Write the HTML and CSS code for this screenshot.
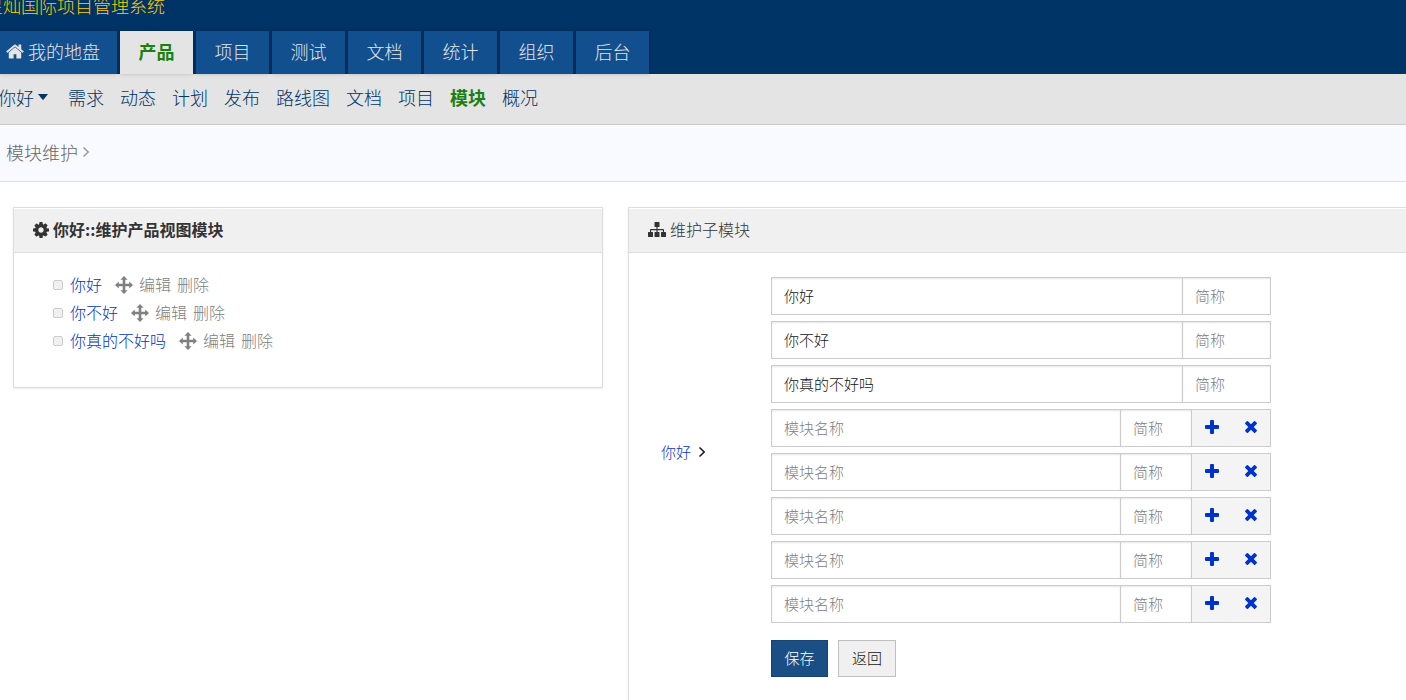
FILE: index.html
```html
<!DOCTYPE html>
<html lang="zh-CN">
<head>
<meta charset="utf-8">
<title>模块维护</title>
<link rel="stylesheet" href="styles.css">
</head>
<body>
<svg class="sprite" aria-hidden="true">
  <symbol id="home" viewBox="64 128 1664 1536"><path d="M1472 992v480q0 26-19 45t-45 19h-384v-384h-256v384h-384q-26 0-45-19t-19-45v-480q0-1 .5-3t.5-3l575-474 575 474q1 2 1 6zm223-69l-62 74q-8 9-21 11h-3q-13 0-21-7l-692-577-692 577q-12 8-24 7-13-2-21-11l-62-74q-8-10-7-23.500t11-21.500l719-599q32-26 76-26t76 26l244 204v-195q0-14 9-23t23-9h192q14 0 23 9t9 23v408l219 182q10 8 11 21.500t-7 23.500z"/></symbol>
  <symbol id="cog" viewBox="128 128 1536 1536"><path d="M1152 896q0-106-75-181t-181-75-181 75-75 181 75 181 181 75 181-75 75-181zm512-109v222q0 12-8 23t-20 13l-185 28q-19 54-39 91 35 50 107 138 10 12 10 25t-9 23q-27 37-99 108t-94 71q-12 0-26-9l-138-108q-44 23-91 38-16 136-29 186-7 28-36 28h-222q-14 0-24.500-8.500t-11.500-21.500l-28-184q-49-16-90-37l-141 107q-10 9-25 9-14 0-25-11-126-114-165-168-7-10-7-23 0-12 8-23 15-21 51-66.500t54-70.500q-27-50-41-99l-183-27q-13-2-21-12.500t-8-23.500v-222q0-12 8-23t19-13l186-28q14-46 39-92-40-57-107-138-10-12-10-24 0-10 9-23 26-36 98.500-107.500t94.500-71.500q13 0 26 10l138 107q44-23 91-38 16-136 29-186 7-28 36-28h222q14 0 24.500 8.500t11.500 21.500l28 184q49 16 90 37l142-107q9-9 24-9 13 0 25 10 129 119 165 170 7 8 7 22 0 12-8 23-15 21-51 66.500t-54 70.500q26 50 41 98l183 28q13 2 21 12.500t8 23.500z"/></symbol>
  <symbol id="move" viewBox="0 0 18 18"><path d="M9 0l3.600 3.800h-2.300v3.900h3.900V5.400L18 9l-3.800 3.600v-2.300h-3.900v3.900h2.300L9 18l-3.600-3.800h2.300v-3.900H3.800v2.300L0 9l3.800-3.600v2.300h3.900V3.800H5.400z"/></symbol>
  <symbol id="sitemap" viewBox="0 0 18 15"><path d="M7 0h4q.5 0 .5.500v4q0 .5-.5.500H9.600v2h5.600q.8 0 .8.800V10h1.500q.5 0 .5.500v4q0 .5-.5.500h-4q-.5 0-.5-.5v-4q0-.5.500-.5h1.400V8.200H9.600V10H11q.5 0 .5.500v4q0 .5-.5.500H7q-.5 0-.5-.5v-4q0-.5.500-.5h1.400V8.200H3.100V10h1.400q.5 0 .5.500v4q0 .5-.5.500h-4q-.5 0-.5-.5v-4q0-.5.500-.5H2V7.800q0-.8.800-.8h5.600V5H7q-.5 0-.5-.5v-4Q6.500 0 7 0z"/></symbol>
  <symbol id="plus" viewBox="0 0 14 14"><path d="M6 0h2q1 0 1 1v4h4q1 0 1 1v2q0 1-1 1H9v4q0 1-1 1H6q-1 0-1-1V9H1Q0 9 0 8V6q0-1 1-1h4V1q0-1 1-1z"/></symbol>
  <symbol id="times" viewBox="0 0 12 12"><path d="M3 .3l3 3 3-3q.6-.5 1.200 0l1.500 1.500q.5.600 0 1.200l-3 3 3 3q.5.600 0 1.200l-1.500 1.500q-.6.500-1.200 0l-3-3-3 3q-.6.500-1.200 0L.3 10.200q-.5-.6 0-1.200l3-3-3-3q-.5-.6 0-1.200L1.800.3Q2.400-.2 3 .3z"/></symbol>
  <symbol id="angle" viewBox="0 0 8 12"><path d="M1.500 1.500L6.200 6l-4.700 4.500" fill="none" stroke="currentColor" stroke-width="1.500"/></symbol>
  <symbol id="caret" viewBox="0 0 10 6"><path d="M0 0h10L5.600 5.500q-.6.600-1.200 0z"/></symbol>
</svg>

<header class="header">
  <div class="brand">星灿国际项目管理系统</div>
  <nav class="tabs" aria-label="主导航">
    <a class="tab tab-home" href="#"><svg class="icon icon-home"><use href="#home"/></svg>我的地盘</a>
    <a class="tab active" href="#">产品</a>
    <a class="tab" href="#">项目</a>
    <a class="tab" href="#">测试</a>
    <a class="tab" href="#">文档</a>
    <a class="tab" href="#">统计</a>
    <a class="tab" href="#">组织</a>
    <a class="tab" href="#">后台</a>
  </nav>
</header>
<nav class="subnav" aria-label="产品导航">
  <a class="current-product" href="#">你好<svg class="icon icon-caret"><use href="#caret"/></svg></a>
  <a href="#">需求</a>
  <a href="#">动态</a>
  <a href="#">计划</a>
  <a href="#">发布</a>
  <a href="#">路线图</a>
  <a href="#">文档</a>
  <a href="#">项目</a>
  <a class="active" href="#">模块</a>
  <a href="#">概况</a>
</nav>
<div class="crumbs">模块维护<svg class="icon icon-angle"><use href="#angle"/></svg></div>

<main class="content">
  <section class="panel">
    <h2 class="panel-title strong"><svg class="icon icon-cog"><use href="#cog"/></svg>你好::维护产品视图模块</h2>
    <ul class="tree">
      <li><input type="checkbox" aria-label="你好"><a class="name" href="#">你好</a><svg class="icon icon-move"><use href="#move"/></svg><a href="#">编辑</a><a href="#">删除</a></li>
      <li><input type="checkbox" aria-label="你不好"><a class="name" href="#">你不好</a><svg class="icon icon-move"><use href="#move"/></svg><a href="#">编辑</a><a href="#">删除</a></li>
      <li><input type="checkbox" aria-label="你真的不好吗"><a class="name" href="#">你真的不好吗</a><svg class="icon icon-move"><use href="#move"/></svg><a href="#">编辑</a><a href="#">删除</a></li>
    </ul>
  </section>

  <section class="panel panel-wide">
    <h2 class="panel-title"><svg class="icon icon-sitemap"><use href="#sitemap"/></svg>维护子模块</h2>
    <form class="editor">
      <div class="parent"><a href="#">你好</a><svg class="icon icon-angle"><use href="#angle"/></svg></div>
      <div class="rows">
        <div class="row"><input type="text" value="你好" aria-label="模块名称"><input class="short" type="text" placeholder="简称" aria-label="简称"></div>
        <div class="row"><input type="text" value="你不好" aria-label="模块名称"><input class="short" type="text" placeholder="简称" aria-label="简称"></div>
        <div class="row"><input type="text" value="你真的不好吗" aria-label="模块名称"><input class="short" type="text" placeholder="简称" aria-label="简称"></div>
        <div class="row new"><input type="text" placeholder="模块名称" aria-label="模块名称"><input class="short" type="text" placeholder="简称" aria-label="简称"><div class="actions"><button type="button" aria-label="添加"><svg class="icon icon-plus"><use href="#plus"/></svg></button><button type="button" aria-label="移除"><svg class="icon icon-times"><use href="#times"/></svg></button></div></div>
        <div class="row new"><input type="text" placeholder="模块名称" aria-label="模块名称"><input class="short" type="text" placeholder="简称" aria-label="简称"><div class="actions"><button type="button" aria-label="添加"><svg class="icon icon-plus"><use href="#plus"/></svg></button><button type="button" aria-label="移除"><svg class="icon icon-times"><use href="#times"/></svg></button></div></div>
        <div class="row new"><input type="text" placeholder="模块名称" aria-label="模块名称"><input class="short" type="text" placeholder="简称" aria-label="简称"><div class="actions"><button type="button" aria-label="添加"><svg class="icon icon-plus"><use href="#plus"/></svg></button><button type="button" aria-label="移除"><svg class="icon icon-times"><use href="#times"/></svg></button></div></div>
        <div class="row new"><input type="text" placeholder="模块名称" aria-label="模块名称"><input class="short" type="text" placeholder="简称" aria-label="简称"><div class="actions"><button type="button" aria-label="添加"><svg class="icon icon-plus"><use href="#plus"/></svg></button><button type="button" aria-label="移除"><svg class="icon icon-times"><use href="#times"/></svg></button></div></div>
        <div class="row new"><input type="text" placeholder="模块名称" aria-label="模块名称"><input class="short" type="text" placeholder="简称" aria-label="简称"><div class="actions"><button type="button" aria-label="添加"><svg class="icon icon-plus"><use href="#plus"/></svg></button><button type="button" aria-label="移除"><svg class="icon icon-times"><use href="#times"/></svg></button></div></div>
      </div>
      <div class="buttons">
        <button class="btn primary" type="submit">保存</button>
        <button class="btn" type="button">返回</button>
      </div>
    </form>
  </section>
</main>
</body>
</html>
```
FILE: styles.css
```css
* {
  box-sizing: border-box;
}

html {
  overflow: hidden;
}

body {
  margin: 0;
  background: #fff;
  color: #141414;
  font: 300 16px/24px "Noto Sans CJK SC", sans-serif;
}

a {
  color: #03c;
  text-decoration: none;
}

input,
button {
  font: inherit;
  margin: 0;
}

.sprite {
  display: block;
  width: 0;
  height: 0;
}

.icon {
  flex: none;
  fill: currentColor;
}

.header {
  background: #036;
}

.brand {
  height: 31px;
  margin-left: -15px;
  color: #fc0;
  font-size: 18px;
  line-height: 10px;
  white-space: nowrap;
}

.tabs {
  display: flex;
  gap: 3px;
  font-size: 18px;
  line-height: 40px;
}

.tab {
  flex: 0 0 73px;
  padding-bottom: 3px;
  background: #114f8e;
  color: #e5e5e5;
  text-align: center;
  box-shadow: 0 0 4px rgba(0, 0, 0, .2);
}

.tab-home {
  display: flex;
  flex-basis: 117px;
  align-items: center;
  gap: 4px;
  padding-left: 6px;
}

.icon-home {
  width: 18px;
  height: 17px;
}

.tab.active {
  background: #e4e4e4;
}

.tab.active,
.subnav .active {
  color: #1a8011;
  font-weight: bold;
}

.subnav {
  display: flex;
  gap: 16px;
  padding-bottom: 4px;
  background: #e4e4e4;
  border-bottom: 1px solid #c8c8c8;
  font-size: 18px;
  line-height: 46px;
}

.subnav a {
  color: #036;
}

.subnav .current-product {
  display: flex;
  align-items: center;
  gap: 4px;
  margin-left: -2px;
  padding-right: 4px;
}

.icon-caret {
  width: 10px;
  height: 6px;
}

.crumbs {
  display: flex;
  align-items: center;
  gap: 4px;
  padding: 0 0 2px 6px;
  background: #f8faff;
  border-bottom: 1px solid #ddd;
  color: #666;
  font-size: 18px;
  line-height: 54px;
}

.crumbs .icon {
  color: #999;
}

.icon-angle {
  width: 8px;
  height: 12px;
}

.content {
  display: grid;
  grid-template-columns: 590px 1fr;
  gap: 25px;
  align-items: start;
  padding: 25px 0 0 13px;
}

.panel {
  border: 1px solid #ddd;
  box-shadow: 0 1px 2px rgba(0, 0, 0, .08);
}

.panel-wide {
  border-right: 0;
}

.panel-title {
  display: flex;
  align-items: center;
  gap: 4px;
  margin: 1px 0 0;
  padding: 0 19px 2px;
  background: #f0f0f0;
  border-bottom: 1px solid #ddd;
  color: #333;
  font-size: 16px;
  font-weight: inherit;
  line-height: 41px;
}

.panel-title.strong {
  font-weight: bold;
}

.icon-cog {
  width: 16px;
  height: 16px;
}

.icon-sitemap {
  width: 18px;
  height: 15px;
}

.tree {
  margin: 0;
  padding: 18px 39px 32px;
  list-style: none;
  line-height: 26px;
}

.tree li {
  display: flex;
  align-items: center;
  gap: 6px;
}

.tree a {
  padding-bottom: 2px;
  color: #808080;
}

.tree .name {
  padding: 0 7px 2px 1px;
  color: #03c;
}

.tree input {
  appearance: none;
  width: 10px;
  height: 10px;
  background: #f0f0f0;
  border: 1px solid #ccc;
  border-radius: 2px;
}

.icon-move {
  width: 18px;
  height: 18px;
  color: #808080;
}

.editor {
  display: grid;
  grid-template-columns: 110px minmax(0, 500px);
  padding: 24px 32px;
  font-size: 15px;
}

.parent {
  display: flex;
  align-items: center;
  gap: 7px;
  padding-top: 3px;
}

.rows {
  display: grid;
  gap: 6px;
}

.row {
  display: grid;
  grid-template-columns: 1fr 88px;
  height: 38px;
  border: 1px solid #ccc;
}

.row.new {
  grid-template-columns: 1fr 71px 79px;
}

.row input {
  width: 100%;
  min-width: 0;
  padding: 0 12px 1px;
  background: #fff;
  border: 0;
  color: #141414;
  box-shadow: inset 0 1px 2px rgba(0, 0, 0, .1);
}

.row .short {
  border-left: 1px solid #ccc;
}

.row input::placeholder {
  color: #808080;
  opacity: 1;
}

.actions {
  display: grid;
  grid-template-columns: 1fr 1fr;
  padding-bottom: 2px;
  background: #f4f4f4;
  border-left: 1px solid #ccc;
}

.actions button {
  display: flex;
  align-items: center;
  justify-content: center;
  padding: 0;
  background: none;
  border: 0;
  color: #03c;
}

.icon-plus {
  width: 14px;
  height: 14px;
}

.icon-times {
  width: 12px;
  height: 12px;
}

.buttons {
  display: flex;
  grid-column: 2;
  gap: 10px;
  padding-top: 17px;
}

.btn {
  min-width: 57px;
  padding: 0 13px 2px;
  background: #f0f0f0;
  border: 1px solid #bfbfbf;
  color: #141414;
  line-height: 33px;
}

.btn.primary {
  padding: 0 12px 2px;
  background: #1a4f85;
  border-color: #164371;
  color: #fff;
}
```
